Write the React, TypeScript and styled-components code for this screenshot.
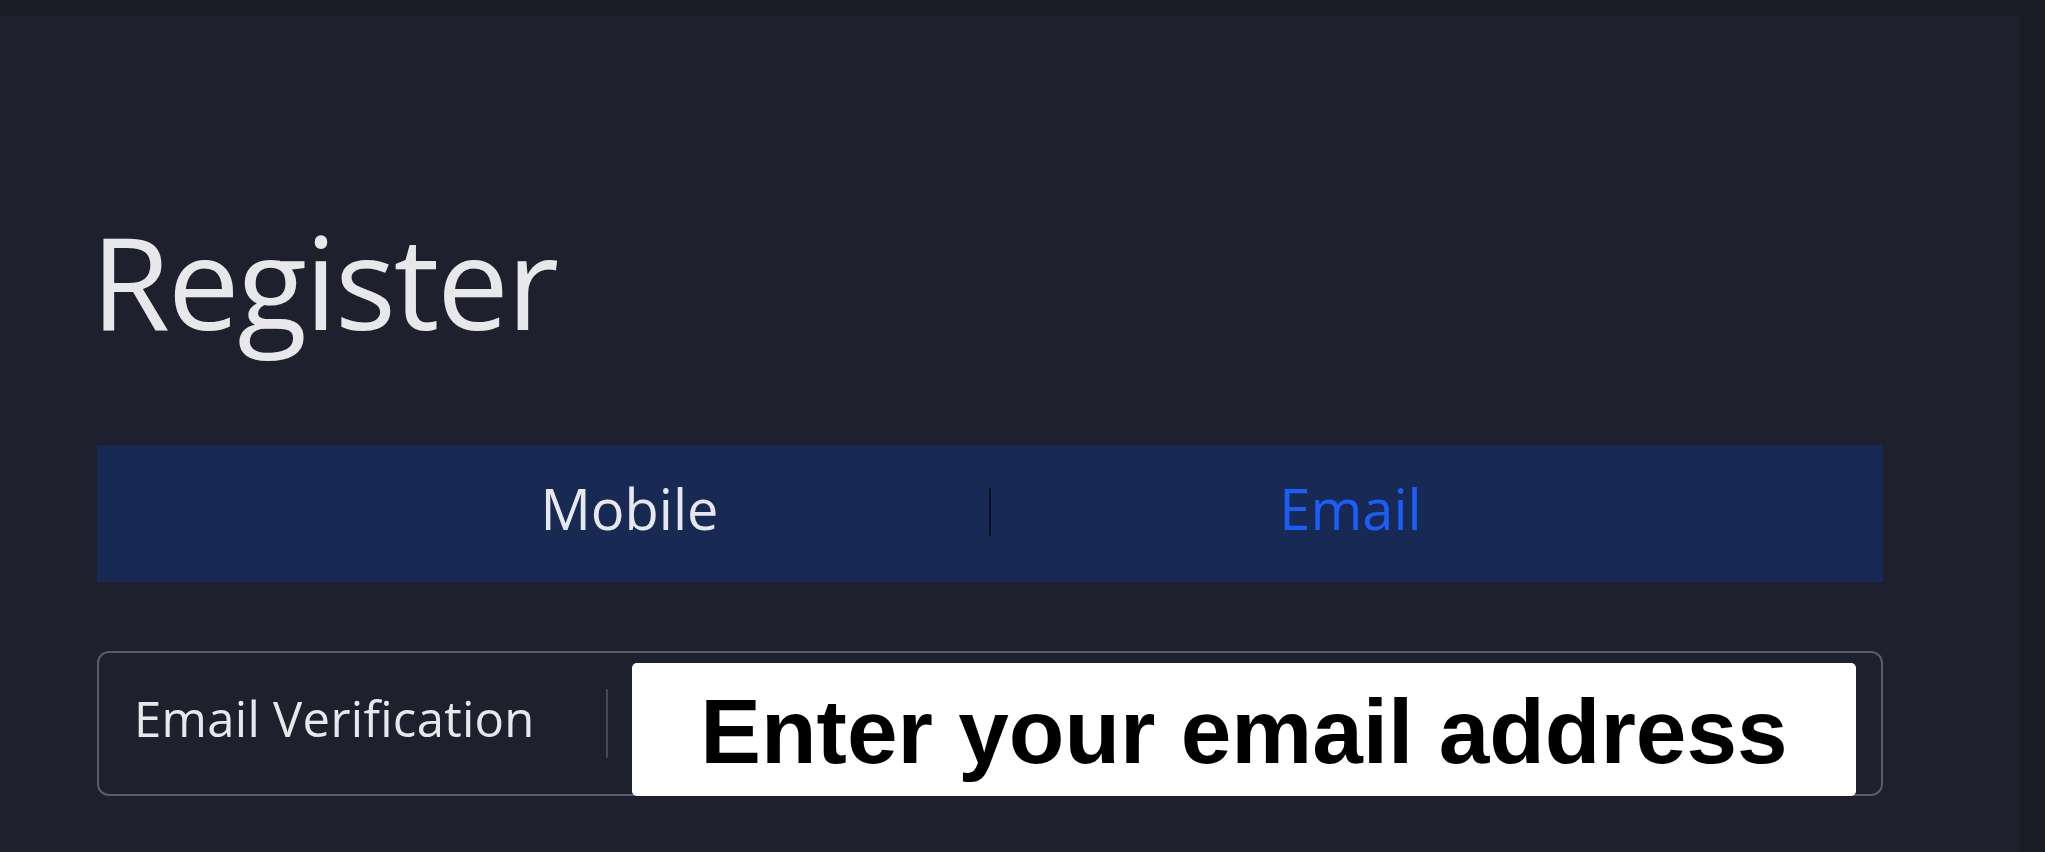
import React from "react";
import styled, { createGlobalStyle } from "styled-components";

const Global = createGlobalStyle`
  html, body { margin: 0; padding: 0; background: #1a1c26; }
  body { width: 2045px; height: 852px; overflow: hidden; }
  #root { height: 100%; }
`;

const Page = styled.div`
  display: flex;
  width: 2045px;
  height: 852px;
  padding-top: 16px;
  box-sizing: border-box;
  background: #1a1c26;
`;

const Panel = styled.main`
  width: 2020px;
  height: 100%;
  background: #1e212d;
  box-sizing: border-box;
  padding: 201px 137px 0 97px;
  display: flex;
  flex-direction: column;
`;

const Title = styled.h1`
  margin: 0 0 0 -6px;
  font-family: "Open Sans", "Noto Sans", sans-serif;
  font-weight: 400;
  font-size: 128px;
  line-height: 1;
  color: #e8e8ea;
  letter-spacing: -2.2px;
`;

const TabBar = styled.div`
  margin-top: 100px;
  height: 137px;
  background: #182a53;
  display: flex;
  justify-content: center;
  align-items: center;
`;

const Tab = styled.div<{ $active?: boolean }>`
  width: 719px;
  text-align: center;
  font-family: "Open Sans", "Noto Sans", sans-serif;
  font-size: 56px;
  line-height: 1;
  color: ${(p) => (p.$active ? "#1a5ef7" : "#e6e8ee")};
  padding-bottom: 11px;
`;

const TabDivider = styled.span`
  width: 2px;
  height: 48px;
  background: #0b1020;
  margin-bottom: 4px;
`;

const Field = styled.div`
  margin-top: 69px;
  height: 145px;
  box-sizing: border-box;
  border: 2px solid #5a5d69;
  border-radius: 12px;
  display: flex;
  align-items: center;
`;

const FieldLabel = styled.label`
  width: 507px;
  box-sizing: border-box;
  padding-left: 35px;
  font-family: "Open Sans", "Noto Sans", sans-serif;
  font-size: 49px;
  line-height: 1;
  color: #e6e8ee;
  padding-bottom: 11px;
  letter-spacing: 0.3px;
`;

const FieldDivider = styled.span`
  width: 2px;
  height: 69px;
  background: #464957;
  border-radius: 1px;
  margin-right: 24px;
`;

const Overlay = styled.div`
  flex: 1;
  align-self: flex-end;
  height: 133px;
  margin: 0 25px -2px 0;
  background: #ffffff;
  border-radius: 5px;
  display: flex;
  align-items: center;
  justify-content: center;
  font-family: "Liberation Sans", Arial, sans-serif;
  font-weight: 700;
  font-size: 91px;
  line-height: 1;
  color: #000000;
  padding-top: 4px;
  box-sizing: border-box;
`;

export default function App() {
  return (
    <>
      <Global />
      <Page>
        <Panel>
          <Title>Register</Title>
          <TabBar>
            <Tab>Mobile</Tab>
            <TabDivider />
            <Tab $active>Email</Tab>
          </TabBar>
          <Field>
            <FieldLabel>Email Verification</FieldLabel>
            <FieldDivider />
            <Overlay>Enter your email address</Overlay>
          </Field>
        </Panel>
      </Page>
    </>
  );
}
